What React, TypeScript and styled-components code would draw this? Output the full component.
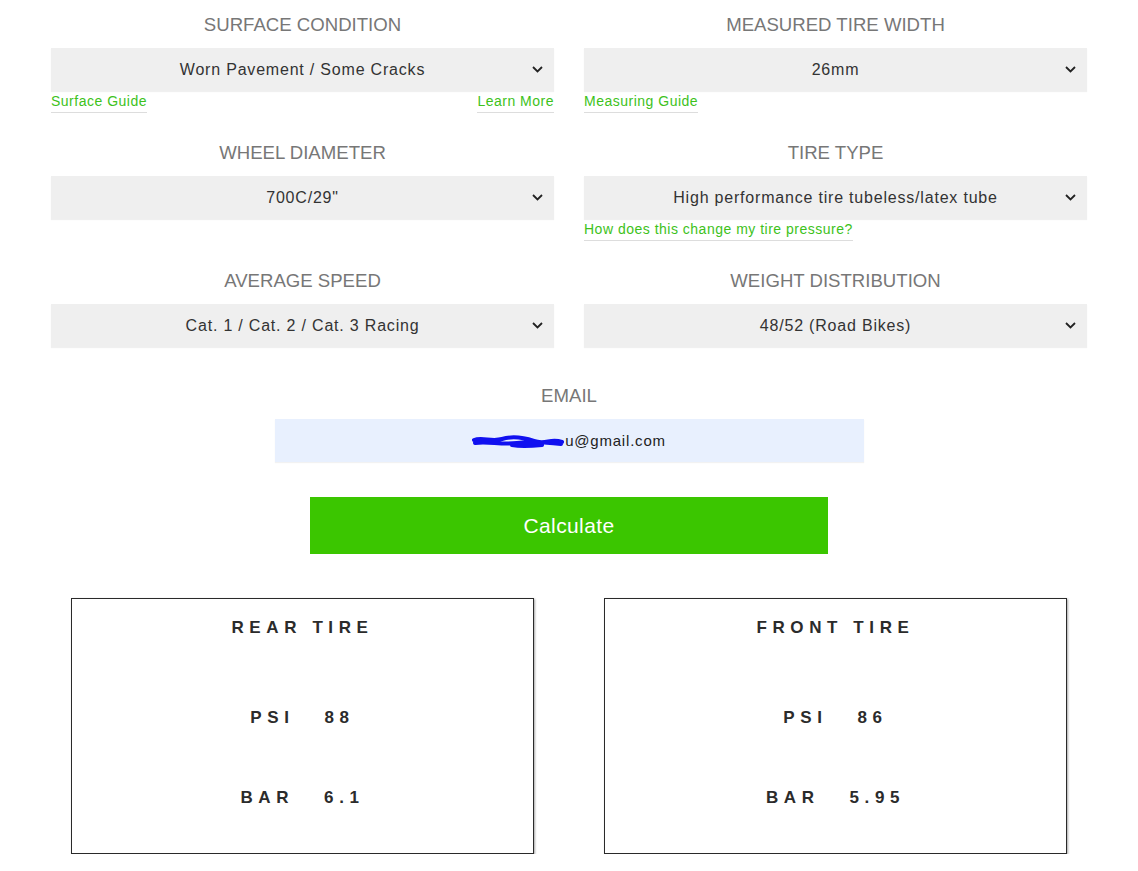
import React from 'react';
import styled, { createGlobalStyle } from 'styled-components';

const GlobalStyle = createGlobalStyle`
  html, body {
    margin: 0;
    padding: 0;
    background: #fff;
  }
  body {
    font-family: "Liberation Sans", Arial, sans-serif;
  }
`;

const Page = styled.div`
  width: 1036px;
  margin: 0 auto;
  padding-top: 13px;
`;

const FieldGrid = styled.div`
  display: grid;
  grid-template-columns: 503px 503px;
  column-gap: 30px;
  row-gap: 28px;
`;

const Field = styled.div`
  display: flex;
  flex-direction: column;
`;

const Label = styled.div`
  text-align: center;
  font-size: 18.6px;
  line-height: 24px;
  color: #777;
  margin-bottom: 11px;
`;

const SelectBox = styled.div`
  position: relative;
  height: 43px;
  background: #efefef;
  box-shadow: 0 1px 1px rgba(0, 0, 0, 0.06);
  display: flex;
  align-items: center;
  justify-content: center;
  font-size: 16px;
  letter-spacing: 0.8px;
  color: #333;
`;

const Chevron = styled.svg`
  position: absolute;
  right: 11px;
  top: 50%;
  margin-top: -4px;
  width: 11px;
  height: 7px;
`;

const LinkRow = styled.div`
  box-sizing: border-box;
  height: 22px;
  display: flex;
  justify-content: space-between;
  align-items: flex-start;
  padding-top: 2px;
`;

const GuideLink = styled.a`
  color: #3dc21b;
  font-size: 14px;
  line-height: 17px;
  letter-spacing: 0.5px;
  text-decoration: none;
  border-bottom: 1px solid #ddd;
  padding-bottom: 2px;
`;

const EmailSection = styled.div`
  margin-top: 15px;
  display: flex;
  flex-direction: column;
  align-items: center;
`;

const EmailInput = styled.div`
  width: 589px;
  height: 43px;
  background: #e8f0fe;
  box-shadow: 0 1px 1px rgba(0, 0, 0, 0.05);
  display: flex;
  align-items: center;
  justify-content: center;
  font-size: 15px;
  letter-spacing: 0.8px;
  color: #222;
`;

const Scribble = styled.span`
  display: inline-block;
  position: relative;
  width: 92px;
  height: 12px;
  margin-right: 1px;
`;

const CalcButton = styled.button`
  margin-top: 35px;
  width: 518px;
  height: 57px;
  border: none;
  background: #3bc600;
  color: #fff;
  font-family: "Liberation Sans", Arial, sans-serif;
  font-size: 21px;
  letter-spacing: 0.4px;
`;

const ResultGrid = styled.div`
  margin-top: 44px;
  display: grid;
  grid-template-columns: 463px 463px;
  column-gap: 70px;
  padding: 0 20px;
`;

const ResultCard = styled.div`
  height: 256px;
  box-sizing: border-box;
  border: 1px solid #2a2a2a;
  box-shadow: 1px 1px 2px rgba(0, 0, 0, 0.35);
  display: flex;
  flex-direction: column;
  align-items: center;
  padding-top: 19px;
`;

const CardLine = styled.div<{ gap?: number }>`
  margin-top: ${({ gap }) => gap ?? 0}px;
  font-size: 17px;
  line-height: 20px;
  font-weight: bold;
  letter-spacing: 5.6px;
  color: #2b2b2b;
  display: flex;
`;

const Value = styled.span`
  margin-left: 30px;
`;

const ChevronIcon = () => (
  <Chevron viewBox="0 0 11 7">
    <path d="M1 1l4.5 4.5L10 1" fill="none" stroke="#222" strokeWidth="1.8" />
  </Chevron>
);

interface FieldProps {
  label: string;
  value: string;
  links?: string[];
}

const SelectField = ({ label, value, links }: FieldProps) => (
  <Field>
    <Label>{label}</Label>
    <SelectBox>
      {value}
      <ChevronIcon />
    </SelectBox>
    <LinkRow>
      {links && links.map((l) => <GuideLink key={l}>{l}</GuideLink>)}
    </LinkRow>
  </Field>
);

const TireCard = ({ title, psi, bar }: { title: string; psi: string; bar: string }) => (
  <ResultCard>
    <CardLine>{title}</CardLine>
    <CardLine gap={70}>
      PSI<Value>{psi}</Value>
    </CardLine>
    <CardLine gap={60}>
      BAR<Value>{bar}</Value>
    </CardLine>
  </ResultCard>
);

export default function App() {
  return (
    <>
      <GlobalStyle />
      <Page>
        <FieldGrid>
          <SelectField
            label="SURFACE CONDITION"
            value="Worn Pavement / Some Cracks"
            links={['Surface Guide', 'Learn More']}
          />
          <SelectField label="MEASURED TIRE WIDTH" value="26mm" links={['Measuring Guide']} />
          <SelectField label="WHEEL DIAMETER" value={'700C/29"'} />
          <SelectField
            label="TIRE TYPE"
            value="High performance tire tubeless/latex tube"
            links={['How does this change my tire pressure?']}
          />
          <SelectField label="AVERAGE SPEED" value="Cat. 1 / Cat. 2 / Cat. 3 Racing" />
          <SelectField label="WEIGHT DISTRIBUTION" value="48/52 (Road Bikes)" />
        </FieldGrid>

        <EmailSection>
          <Label>EMAIL</Label>
          <EmailInput>
            <Scribble>
              <svg width="92" height="14" viewBox="0 0 92 14" style={{ position: 'absolute', top: -1, left: 0 }}>
                <path
                  d="M2 6 C10 3, 20 8, 30 5 S50 3, 62 7 S78 4, 90 8 M3 9 C15 7, 30 11, 45 9 S70 8, 89 10 M40 11 C50 13, 60 12, 70 11"
                  fill="none"
                  stroke="#1010f0"
                  strokeWidth="4"
                  strokeLinecap="round"
                />
              </svg>
            </Scribble>
            u@gmail.com
          </EmailInput>
          <CalcButton>Calculate</CalcButton>
        </EmailSection>

        <ResultGrid>
          <TireCard title="REAR TIRE" psi="88" bar="6.1" />
          <TireCard title="FRONT TIRE" psi="86" bar="5.95" />
        </ResultGrid>
      </Page>
    </>
  );
}
